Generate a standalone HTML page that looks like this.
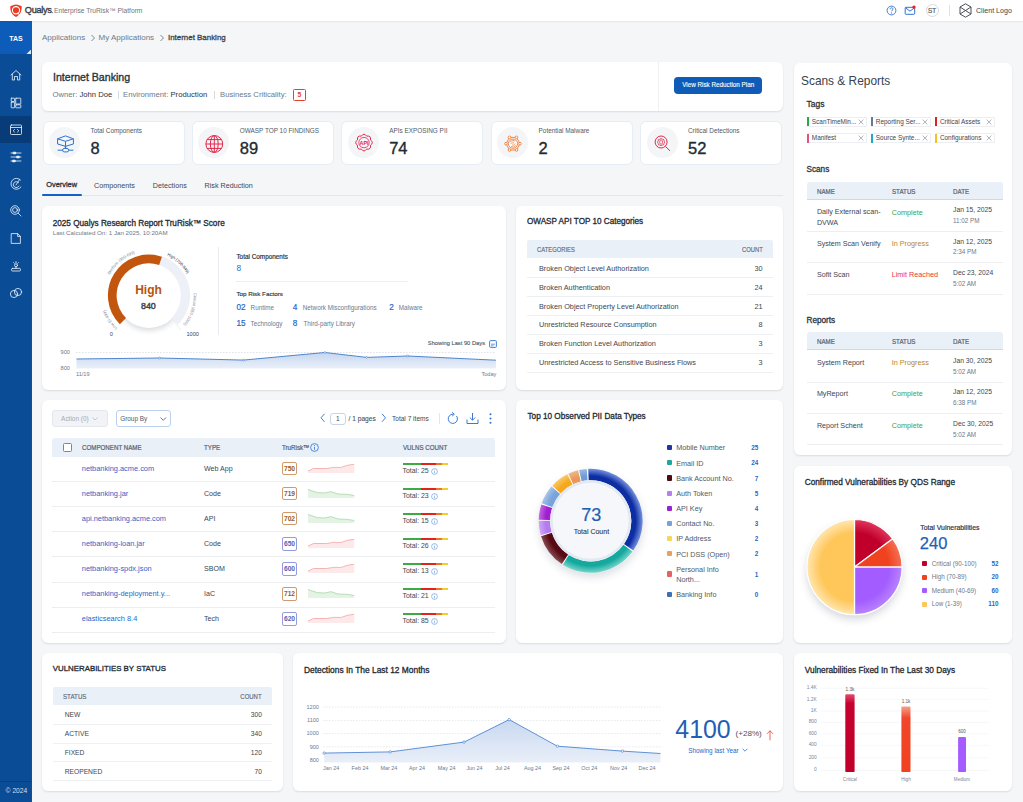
<!DOCTYPE html>
<html><head><meta charset="utf-8">
<style>
*{box-sizing:border-box;margin:0;padding:0}
html,body{width:1023px;height:802px;overflow:hidden}
body{font-family:"Liberation Sans",sans-serif;background:#f5f6f8;color:#2c3440;position:relative}
.abs{position:absolute}
#top{position:absolute;left:0;top:0;width:1023px;height:21px;background:#fff;box-shadow:0 1px 1.5px rgba(0,0,0,.07);z-index:5}
#side{position:absolute;left:0;top:21px;width:32px;height:781px;background:#0a4d96}
.card{position:absolute;background:#fff;border-radius:6px;box-shadow:0 1px 2px rgba(30,45,70,.13)}
.t{position:absolute;white-space:nowrap;line-height:1}
.sc{width:142px;height:44.3px;border:1px solid #e6edf6;box-shadow:none}
.sc .ic{position:absolute;left:5.5px;top:5.5px;width:31px;height:31px;border-radius:50%;background:#f4f5f7}
.sc .lb{position:absolute;left:47px;top:6.5px;font-size:6.4px;color:#4f5a66;white-space:nowrap;line-height:1}
.sc .nm{position:absolute;left:47px;top:18px;font-size:16.5px;color:#222a33;white-space:nowrap;line-height:1;-webkit-text-stroke:0.35px #222a33}
.hd{font-size:7.2px;color:#56636f;transform:scaleX(.86);transform-origin:0 0;-webkit-text-stroke:0.22px #56636f}
.md{-webkit-text-stroke:0.3px currentColor}
</style></head><body>
<!-- TOP BAR -->
<div id="top">
  <svg class="abs" style="left:10px;top:4px" width="12" height="13.5" viewBox="0 0 12 13">
    <path d="M6 0.3 C8 0.6 10.3 1.3 11.7 2 C11.9 6.5 10.5 10.5 6 12.8 C1.5 10.5 0.1 6.5 0.3 2 C1.7 1.3 4 0.6 6 0.3Z" fill="#ec3b23"/>
    <circle cx="6" cy="6" r="3.6" fill="none" stroke="#fff" stroke-width="1.1"/>
    <circle cx="6" cy="6" r="2.2" fill="#ec3b23"/>
    <path d="M7.5 8.5 L9 10.5" stroke="#fff" stroke-width="1"/>
  </svg>
  <div class="t" style="left:24.8px;top:5.6px;font-size:9.2px;color:#363a40;letter-spacing:-0.3px;-webkit-text-stroke:0.35px #363a40">Qualys<span style="font-size:5px">.</span></div>
  <div class="t" style="left:54px;top:7.9px;font-size:6.7px;color:#6f747c">Enterprise TruRisk™ Platform</div>
  <!-- help -->
  <svg class="abs" style="left:886px;top:5px" width="11" height="11" viewBox="0 0 11 11">
    <circle cx="5.5" cy="5.5" r="4.4" fill="none" stroke="#2f72d0" stroke-width="0.9"/>
    <path d="M4 4.3 C4 3.2 4.8 2.8 5.5 2.8 C6.4 2.8 7 3.4 7 4.1 C7 5 5.6 5.2 5.6 6.3" fill="none" stroke="#2f72d0" stroke-width="0.9"/>
    <circle cx="5.6" cy="7.9" r="0.55" fill="#2f72d0"/>
  </svg>
  <!-- mail -->
  <svg class="abs" style="left:904px;top:4px" width="13" height="12" viewBox="0 0 13 12">
    <rect x="1.2" y="3.3" width="9.5" height="7" rx="0.8" fill="none" stroke="#2f72d0" stroke-width="1"/>
    <path d="M1.5 3.8 L6 7.2 L10.5 3.8" fill="none" stroke="#2f72d0" stroke-width="1"/>
    <circle cx="10" cy="3.1" r="1.7" fill="#e8231f"/>
  </svg>
  <!-- ST -->
  <div class="abs" style="left:925.5px;top:4.3px;width:13px;height:13px;border-radius:50%;border:1px solid #d5d9de;font-size:6.3px;color:#555c66;text-align:center;line-height:11.3px;-webkit-text-stroke:0.2px #555c66">ST</div>
  <div class="abs" style="left:949px;top:5px;width:1px;height:11px;background:#dfe2e6"></div>
  <svg class="abs" style="left:959px;top:3px" width="13" height="15" viewBox="0 0 13 15">
    <path d="M6.5 0.8 L12 4 L12 11 L6.5 14.2 L1 11 L1 4 Z" fill="none" stroke="#4a4f57" stroke-width="1"/>
    <path d="M1 4 L12 11 M12 4 L1 11" fill="none" stroke="#4a4f57" stroke-width="1"/>
  </svg>
  <div class="t" style="left:976px;top:8px;font-size:7.1px;color:#3d434b">Client Logo</div>
</div>

<!-- SIDEBAR -->
<div id="side">
  <div class="abs" style="left:0;top:0;width:32px;height:33px;background:#0e5cb9"></div>
  <div class="t" style="left:9.2px;top:13.6px;font-size:7px;font-weight:700;color:#fff">TAS</div>
  <svg class="abs" style="left:25.5px;top:27.5px" width="5.5" height="5.5"><path d="M5.5 0 L5.5 5.5 L0 5.5Z" fill="#dbe7f7"/></svg>
  <div class="abs" style="left:0;top:95px;width:32px;height:27px;background:#083c78"></div>
  <div class="abs" style="left:30.5px;top:33px;width:1.5px;height:748px;background:#0b50a2"></div>
  <svg class="abs" style="left:0;top:0" width="32" height="300" fill="none" stroke="#f2f6fc" stroke-width="0.8" stroke-linejoin="round" stroke-linecap="round">
    <!-- home y=54 -->
    <path d="M11 54 L16 49.5 L21 54 M12.3 53 L12.3 59 L14.5 59 L14.5 55.5 L17.5 55.5 L17.5 59 L19.7 59 L19.7 53"/>
    <!-- dashboard y=81 -->
    <rect x="11.2" y="77.2" width="3.4" height="3.3" rx="0.4"/><rect x="11.2" y="81.2" width="3.4" height="5.6" rx="0.4"/><rect x="15.7" y="77.2" width="5.1" height="5.8" rx="0.4"/><rect x="15.7" y="83.8" width="5.1" height="3" rx="0.4"/>
    <!-- code window y=109 -->
    <rect x="10.5" y="104" width="11" height="9.5" rx="1"/><path d="M10.5 106.5 L21.5 106.5 M14.5 108.5 L13.2 109.8 L14.5 111 M17.5 108.5 L18.8 109.8 L17.5 111"/>
    <!-- sliders y=136 -->
    <path d="M11 132 L21 132 M11 136 L21 136 M11 140 L21 140" stroke-width="0.8"/>
    <rect x="13.5" y="131.2" width="2.2" height="1.6" fill="#fff"/><rect x="17" y="135.2" width="2.2" height="1.6" fill="#fff"/><rect x="13" y="139.2" width="2.2" height="1.6" fill="#fff"/>
    <!-- gauge y=163 -->
    <path d="M20.5 159 A5.5 5.5 0 1 0 21 166"/><path d="M16 164 L19.5 158.5"/><path d="M18.5 161.5 A3 3 0 1 0 19 165"/>
    <!-- search bug y=190 -->
    <circle cx="15" cy="189" r="4.3"/><circle cx="15" cy="189" r="2.4"/><path d="M18.2 192.2 L21 195"/>
    <!-- doc y=217 -->
    <path d="M11.6 212.6 L17.6 212.6 L20.4 215.4 L20.4 222.4 L11.6 222.4 Z M17.6 212.6 L17.6 215.4 L20.4 215.4"/>
    <!-- stamp y=245 -->
    <path d="M16 240.6 L16 241.8 M13.6 241.6 L14.3 242.3 M18.4 241.6 L17.7 242.3"/><circle cx="16" cy="244.3" r="1.5"/><path d="M16 245.8 L16 247.4"/><rect x="11.6" y="247.4" width="8.8" height="2.6" rx="0.8"/>
    <!-- links y=272 -->
    <circle cx="14" cy="273" r="3.6"/><circle cx="18" cy="271" r="3.6"/>
  </svg>
  <div class="abs" style="left:0;top:759.5px;width:31px;height:1px;background:#083f7c"></div>
  <div class="t" style="left:5.6px;top:766.6px;font-size:6.7px;color:#d3dff0">© 2024</div>
</div>

<!-- breadcrumb -->
<div class="t" style="left:42px;top:34px;font-size:8px;color:#6b7a8c">Applications</div>
<svg class="abs" style="left:90px;top:34px" width="6" height="8"><path d="M1.5 1 L4.5 4 L1.5 7" fill="none" stroke="#6b7a8c" stroke-width="0.9"/></svg>
<div class="t" style="left:98.5px;top:34px;font-size:8px;color:#6b7a8c">My Applications</div>
<svg class="abs" style="left:159px;top:34px" width="6" height="8"><path d="M1.5 1 L4.5 4 L1.5 7" fill="none" stroke="#6b7a8c" stroke-width="0.9"/></svg>
<div class="t md" style="left:168px;top:33.75px;font-size:7.93px;color:#3a4350">Internet Banking</div>

<!-- HEADER CARD -->
<div class="card" style="left:42px;top:62px;width:741px;height:49px">
  <div class="t md" style="left:11px;top:10.11px;font-size:10.58px;-webkit-text-stroke:0.35px currentColor;color:#2c333d">Internet Banking</div>
  <div class="t" style="left:10.5px;top:28.8px;font-size:7.7px;color:#6b7a8c">Owner: <span style="color:#2c333d">John Doe</span></div>
  <div class="abs" style="left:76px;top:29px;width:1px;height:8px;background:#d5dae0"></div>
  <div class="t" style="left:81px;top:28.8px;font-size:7.7px;color:#6b7a8c">Environment: <span style="color:#2c333d">Production</span></div>
  <div class="abs" style="left:172px;top:29px;width:1px;height:8px;background:#d5dae0"></div>
  <div class="t" style="left:178px;top:28.8px;font-size:7.7px;color:#6b7a8c">Business Criticality:</div>
  <div class="abs" style="left:251px;top:27px;width:13px;height:12px;border:1px solid #e2412c;border-radius:1.5px;color:#e2412c;font-size:6.8px;font-weight:700;text-align:center;line-height:10.3px">5</div>
  <div class="abs" style="left:616px;top:0;width:1px;height:49px;background:#eef0f3"></div>
  <div class="abs" style="left:632px;top:15.4px;width:88.3px;height:16.9px;background:#0f5cb8;border-radius:4px;color:#fff;font-size:6.3px;text-align:center;line-height:16.9px;-webkit-text-stroke:0.1px #fff">View Risk Reduction Plan</div>
</div>
<!-- STAT CARDS -->
<div class="card sc" style="left:42.5px;top:120.5px">
  <div class="ic"></div>
  <svg class="abs" style="left:12px;top:13px" width="20" height="19" viewBox="0 0 20 19" fill="none" stroke="#2f6fd0" stroke-width="1" stroke-linejoin="round">
    <path d="M9.5 0.9 L17.4 3.8 L17.4 9 L9.5 11.3 L1.6 9 L1.6 3.8 Z M1.6 3.8 L9.5 6.3 L17.4 3.8 M9.5 6.3 L9.5 11.3"/>
    <path d="M9.5 11.3 L9.5 13.5" stroke-width="1.4"/><rect x="6.7" y="13.5" width="5.9" height="3.4" rx="1.5"/><path d="M1.6 15.2 L6.7 15.2 M12.6 15.2 L17.4 15.2"/>
  </svg>
  <div class="lb">Total Components</div><div class="nm">8</div>
</div>
<div class="card sc" style="left:191.8px;top:120.5px">
  <div class="ic"></div>
  <svg class="abs" style="left:12px;top:12px" width="20" height="20" viewBox="0 0 20 20" fill="none" stroke="#e0284a" stroke-width="1">
    <circle cx="9.3" cy="10" r="8.4"/><ellipse cx="9.3" cy="10" rx="3.9" ry="8.4"/><path d="M9.3 1.6 L9.3 18.4 M0.9 10 L17.7 10 M1.9 5.6 L16.7 5.6 M1.9 14.4 L16.7 14.4"/>
  </svg>
  <div class="lb">OWASP TOP 10 FINDINGS</div><div class="nm">89</div>
</div>
<div class="card sc" style="left:341.2px;top:120.5px">
  <div class="ic"></div>
  <svg class="abs" style="left:11.5px;top:11px" width="20" height="20" viewBox="0 0 20 20" fill="none" stroke="#e0284a" stroke-width="1">
    <path d="M7.32 3.13 Q10.00 -0.60 12.68 3.13 Q17.21 2.39 16.47 6.92 Q20.20 9.60 16.47 12.28 Q17.21 16.81 12.68 16.07 Q10.00 19.80 7.32 16.07 Q2.79 16.81 3.53 12.28 Q-0.20 9.60 3.53 6.92 Q2.79 2.39 7.32 3.13 Z"/>
    <circle cx="10" cy="9.6" r="5.2" stroke-width="0.8"/>
    <text x="10" y="11.5" font-size="5.4" font-weight="700" font-family="Liberation Sans" fill="#e0284a" stroke="none" text-anchor="middle">API</text>
  </svg>
  <div class="lb">APIs EXPOSING PII</div><div class="nm">74</div>
</div>
<div class="card sc" style="left:490.6px;top:120.5px">
  <div class="ic"></div>
  <svg class="abs" style="left:12px;top:12px" width="20" height="20" viewBox="0 0 20 20" fill="none" stroke="#ee7d3b" stroke-width="0.9">
    <path d="M5.50 3.40 L12.50 3.40 L16.00 9.70 L12.50 16.00 L5.50 16.00 L2.00 9.70Z"/>
    <circle cx="9" cy="9.7" r="4.6" fill="#fff"/>
    <circle cx="5.50" cy="3.40" r="1.35" fill="#fff"/><circle cx="12.50" cy="3.40" r="1.35" fill="#fff"/><circle cx="16.00" cy="9.70" r="1.35" fill="#fff"/><circle cx="12.50" cy="16.00" r="1.35" fill="#fff"/><circle cx="5.50" cy="16.00" r="1.35" fill="#fff"/><circle cx="2.00" cy="9.70" r="1.35" fill="#fff"/>
    <path d="M6 8.2 C7 6.199999999999999 10 5.8999999999999995 11 7.199999999999999 M6.8 9.899999999999999 C7.5 7.8999999999999995 9.5 7.699999999999999 10 8.7 M12 11.2 C11 13.2 8 13.5 7 12.2 M11.2 9.5 C10.5 11.5 8.5 11.7 8 10.7" stroke-width="0.75"/>
    <circle cx="9" cy="9.7" r="0.5" fill="#ee7d3b" stroke="none"/>
  </svg>
  <div class="lb">Potential Malware</div><div class="nm">2</div>
</div>
<div class="card sc" style="left:640px;top:120.5px">
  <div class="ic"></div>
  <svg class="abs" style="left:12px;top:12px" width="20" height="20" viewBox="0 0 20 20" fill="none" stroke="#e0284a" stroke-width="1">
    <circle cx="8.1" cy="8" r="6"/><path d="M12.4 12.3 L17 16.9"/>
    <path d="M8.1 4.6 L9.4 5.2 L10.8 5.6 L11.1 7 L11.6 8.2 L11 9.5 L10.7 10.8 L9.3 11.1 L8.1 11.6 L6.9 11.1 L5.5 10.8 L5.2 9.5 L4.6 8.2 L5.1 7 L5.4 5.6 L6.8 5.2 Z" stroke-width="0.8"/>
    <ellipse cx="8.1" cy="8.1" rx="1.5" ry="2.1" stroke-width="0.7"/>
  </svg>
  <div class="lb">Critical Detections</div><div class="nm">52</div>
</div>

<!-- TABS -->
<div class="t md" style="left:46.3px;top:181.37px;font-size:7.39px;color:#2c333d">Overview</div>
<div class="t" style="left:94px;top:181.7px;font-size:7.2px;color:#3f4853">Components</div>
<div class="t" style="left:152.8px;top:181.7px;font-size:7.2px;color:#3f4853">Detections</div>
<div class="t" style="left:204.5px;top:181.7px;font-size:7.2px;color:#3f4853">Risk Reduction</div>
<div class="abs" style="left:42px;top:195px;width:741px;height:1px;background:#e3e6ea"></div>
<div class="abs" style="left:42px;top:193.8px;width:39.5px;height:2px;background:#1662c4;border-radius:1px"></div>
<!-- TRURISK CARD -->
<div class="card" style="left:42px;top:206px;width:464px;height:184px"></div>
<div class="t md" style="left:52.7px;top:220px;font-size:8.2px;color:#232a33">2025 Qualys Research Report TruRisk™ Score</div>
<div class="t" style="left:52.7px;top:230.2px;font-size:6.2px;color:#6b7a8c">Last Calculated On: 1 Jan 2025, 10:20AM</div>
<div class="abs" style="left:116.5px;top:263.2px;width:64.4px;height:64.4px;border-radius:50%;background:#fff;box-shadow:0 3px 5px rgba(40,50,70,.16)"></div>
<svg class="abs" style="left:90px;top:240px;overflow:visible" width="120" height="105" viewBox="90 240 120 105"><defs><path id="lm" d="M106.20 284.01 A44 44 0 0 1 144.87 251.57"/><path id="lh" d="M156.34 252.07 A44 44 0 0 1 191.20 284.01"/><path id="lc" d="M192.17 283.75 A45 45 0 0 1 176.40 330.86"/><path id="ll" d="M125.95 334.80 A45.5 45.5 0 0 1 103.37 299.37"/></defs><path d="M161.98 256.82 A40.8 40.8 0 0 1 177.55 324.25" fill="none" stroke="#e3e8ef" stroke-width="0.8"/><path d="M160.57 260.94 A36.45 36.45 0 0 1 174.47 321.17" fill="none" stroke="#edf1f7" stroke-width="8.7"/><path d="M122.93 321.17 A36.45 36.45 0 0 1 160.57 260.94" fill="none" stroke="#c2560e" stroke-width="8.7"/><text font-size="4.1" fill="#7b8794" font-family="Liberation Sans"><textPath href="#lm" startOffset="50%" text-anchor="middle">Medium (300-699)</textPath></text><text font-size="4.1" fill="#2c333d" font-family="Liberation Sans"><textPath href="#lh" startOffset="50%" text-anchor="middle">High (700-849)</textPath></text><text font-size="4.1" fill="#7b8794" font-family="Liberation Sans"><textPath href="#lc" startOffset="50%" text-anchor="middle">Critical (850-1000)</textPath></text><text font-size="4.1" fill="#7b8794" font-family="Liberation Sans"><textPath href="#ll" startOffset="50%" text-anchor="middle">Low (0-499)</textPath></text><path d="M172.0 318.7 L180.8 329.8" stroke="#e6e9ee" stroke-width="0.8"/></svg>
<div class="t" style="left:135.2px;top:283.8px;font-size:12px;font-weight:700;color:#b8530c">High</div>
<div class="t md" style="left:141px;top:302.21px;font-size:8.9px;-webkit-text-stroke:0.45px currentColor;color:#3d4650">840</div>
<div class="t" style="left:109.8px;top:331.5px;font-size:5.6px;color:#3d4650">0</div>
<div class="t" style="left:186.5px;top:331.5px;font-size:5.6px;color:#3d4650">1000</div>
<div class="abs" style="left:218px;top:247px;width:1px;height:88px;background:#e8ebef"></div>
<div class="t md" style="left:236.4px;top:253.82px;font-size:6.4px;-webkit-text-stroke:0.18px currentColor;color:#2c333d">Total Components</div>
<div class="t" style="left:236.4px;top:263.5px;font-size:8.3px;color:#1f68c9">8</div>
<div class="abs" style="left:236px;top:280.8px;width:172px;height:1px;background:#eceef1"></div>
<div class="t md" style="left:236.4px;top:291.02px;font-size:6.25px;-webkit-text-stroke:0.15px currentColor;color:#2c333d">Top Risk Factors</div>
<div class="t" style="left:236.4px;top:303.5px;font-size:8.2px;color:#1f68c9;-webkit-text-stroke:0.2px #1f68c9">02</div>
<div class="t" style="left:250.6px;top:304.6px;font-size:6.3px;color:#6b7a8c">Runtime</div>
<div class="t" style="left:292.8px;top:303.5px;font-size:8.2px;color:#1f68c9;-webkit-text-stroke:0.2px #1f68c9">4</div>
<div class="t" style="left:302.8px;top:304.6px;font-size:6.3px;color:#6b7a8c">Network Misconfigurations</div>
<div class="t" style="left:389.3px;top:303.5px;font-size:8.2px;color:#1f68c9;-webkit-text-stroke:0.2px #1f68c9">2</div>
<div class="t" style="left:398.8px;top:304.6px;font-size:6.3px;color:#6b7a8c">Malware</div>
<div class="t" style="left:236.4px;top:320.2px;font-size:8.2px;color:#1f68c9;-webkit-text-stroke:0.2px #1f68c9">15</div>
<div class="t" style="left:250.6px;top:321.3px;font-size:6.3px;color:#6b7a8c">Technology</div>
<div class="t" style="left:292.8px;top:320.2px;font-size:8.2px;color:#1f68c9;-webkit-text-stroke:0.2px #1f68c9">8</div>
<div class="t" style="left:303.5px;top:321.3px;font-size:6.3px;color:#6b7a8c">Third-party Library</div>
<div class="t md" style="left:427.8px;top:340.90px;font-size:5.75px;-webkit-text-stroke:0.12px currentColor;color:#4f5a66;">Showing Last 90 Days</div>
<svg class="abs" style="left:488.5px;top:339.5px" width="8" height="8" viewBox="0 0 8 8"><rect x="0.6" y="0.6" width="6.8" height="6.8" rx="1" fill="none" stroke="#2f72d0" stroke-width="0.9"/><path d="M2 4.2 L6 4.2 M2 5.8 L4.5 5.8" stroke="#2f72d0" stroke-width="0.7"/></svg>
<svg class="abs" style="left:0;top:0" width="1023" height="802" viewBox="0 0 1023 802" pointer-events="none"><defs><linearGradient id="ga" x1="0" y1="0" x2="0" y2="1"><stop offset="0" stop-color="#c5d6f0"/><stop offset="1" stop-color="#eaf0f9"/></linearGradient></defs><path d="M76 352.5 L496 352.5" stroke="#c9ced6" stroke-width="0.6" stroke-dasharray="1.5 1.5"/><polygon points="76.5,368.5 76.5,359 159.6,358 243.5,360.1 324.9,352.5 366.6,357.4 407.7,356 495.9,360.2 495.9,368.5" fill="url(#ga)"/><polyline points="76.5,359 159.6,358 243.5,360.1 324.9,352.5 366.6,357.4 407.7,356 495.9,360.2" fill="none" stroke="#4f86cf" stroke-width="1"/><circle cx="159.6" cy="358" r="0.9" fill="#fff" stroke="#4f86cf" stroke-width="0.6"/><circle cx="243.5" cy="360.1" r="0.9" fill="#fff" stroke="#4f86cf" stroke-width="0.6"/><circle cx="324.9" cy="352.5" r="0.9" fill="#fff" stroke="#4f86cf" stroke-width="0.6"/><circle cx="366.6" cy="357.4" r="0.9" fill="#fff" stroke="#4f86cf" stroke-width="0.6"/><circle cx="407.7" cy="356" r="0.9" fill="#fff" stroke="#4f86cf" stroke-width="0.6"/></svg>
<div class="t" style="left:60.6px;top:350.4px;font-size:5.6px;color:#6b7a8c">900</div>
<div class="t" style="left:60.6px;top:366.2px;font-size:5.6px;color:#6b7a8c">800</div>
<div class="t" style="left:76px;top:371.5px;font-size:5.6px;color:#6b7a8c">11/19</div>
<div class="t" style="left:481.4px;top:372.2px;font-size:5.6px;color:#6b7a8c">Today</div>
<!-- OWASP -->
<div class="card" style="left:516px;top:206px;width:267px;height:184px"></div>
<div class="t md" style="left:527px;top:218.21px;font-size:8.13px;color:#232a33">OWASP API TOP 10 Categories</div>
<div class="abs" style="left:527px;top:240px;width:246px;height:18.3px;background:#eaf0f8;border-radius:2px 2px 0 0"></div>
<div class="t" style="left:537.4px;top:246.2px;font-size:7.3px;color:#5d6b7a;transform:scaleX(.8);transform-origin:0 0;-webkit-text-stroke:0.15px #5d6b7a">CATEGORIES</div>
<div class="t" style="left:741.5px;top:246.2px;font-size:7.3px;color:#5d6b7a;transform:scaleX(.8);transform-origin:0 0;-webkit-text-stroke:0.15px #5d6b7a">COUNT</div>
<div class="t" style="left:539px;top:264.8px;font-size:7.3px;color:#3e4650">Broken Object Level Authorization</div>
<div class="t" style="right:260.5px;top:264.8px;font-size:7.3px;color:#3e4650">30</div>
<div class="abs" style="left:527px;top:277.2px;width:246px;height:0.8px;background:#edf0f3"></div>
<div class="t" style="left:539px;top:283.7px;font-size:7.3px;color:#3e4650">Broken Authentication</div>
<div class="t" style="right:260.5px;top:283.7px;font-size:7.3px;color:#3e4650">24</div>
<div class="abs" style="left:527px;top:296.1px;width:246px;height:0.8px;background:#edf0f3"></div>
<div class="t" style="left:539px;top:302.5px;font-size:7.3px;color:#3e4650">Broken Object Property Level Authorization</div>
<div class="t" style="right:260.5px;top:302.5px;font-size:7.3px;color:#3e4650">21</div>
<div class="abs" style="left:527px;top:314.9px;width:246px;height:0.8px;background:#edf0f3"></div>
<div class="t" style="left:539px;top:321.4px;font-size:7.3px;color:#3e4650">Unrestricted Resource Consumption</div>
<div class="t" style="right:260.5px;top:321.4px;font-size:7.3px;color:#3e4650">8</div>
<div class="abs" style="left:527px;top:333.8px;width:246px;height:0.8px;background:#edf0f3"></div>
<div class="t" style="left:539px;top:340.2px;font-size:7.3px;color:#3e4650">Broken Function Level Authorization</div>
<div class="t" style="right:260.5px;top:340.2px;font-size:7.3px;color:#3e4650">3</div>
<div class="abs" style="left:527px;top:352.6px;width:246px;height:0.8px;background:#edf0f3"></div>
<div class="t" style="left:539px;top:359.1px;font-size:7.3px;color:#3e4650">Unrestricted Access to Sensitive Business Flows</div>
<div class="t" style="right:260.5px;top:359.1px;font-size:7.3px;color:#3e4650">3</div>
<div class="abs" style="left:527px;top:371.5px;width:246px;height:0.8px;background:#edf0f3"></div>
<!-- SCANS & REPORTS -->
<div class="card" style="left:794px;top:62.5px;width:218.3px;height:392px"></div>
<div class="t" style="left:801px;top:75.5px;font-size:11.9px;color:#3a424c">Scans &amp; Reports</div>
<div class="t md" style="left:806.5px;top:100.49px;font-size:8.5px;color:#2c333d">Tags</div>
<div class="abs" style="left:806.8px;top:116.8px;width:60.2px;height:9.8px;border:0.8px solid #eceef1;border-left:none;border-radius:1px;background:#fff"></div>
<div class="abs" style="left:806.8px;top:117.1px;width:1.8px;height:9.2px;background:#2aa84a"></div>
<div class="t" style="left:811.8px;top:118.5px;font-size:6.45px;color:#3e4650">ScanTimeMin...</div>
<svg class="abs" style="left:858.3px;top:118.8px" width="6" height="6"><path d="M0.6 0.6 L5.4 5.4 M5.4 0.6 L0.6 5.4" stroke="#7b838d" stroke-width="0.6"/></svg>
<div class="abs" style="left:870.8px;top:116.8px;width:60.2px;height:9.8px;border:0.8px solid #eceef1;border-left:none;border-radius:1px;background:#fff"></div>
<div class="abs" style="left:870.8px;top:117.1px;width:1.8px;height:9.2px;background:#5f7c95"></div>
<div class="t" style="left:875.8px;top:118.5px;font-size:6.45px;color:#3e4650">Reporting Ser...</div>
<svg class="abs" style="left:922.3px;top:118.8px" width="6" height="6"><path d="M0.6 0.6 L5.4 5.4 M5.4 0.6 L0.6 5.4" stroke="#7b838d" stroke-width="0.6"/></svg>
<div class="abs" style="left:934.9px;top:116.8px;width:60.2px;height:9.8px;border:0.8px solid #eceef1;border-left:none;border-radius:1px;background:#fff"></div>
<div class="abs" style="left:934.9px;top:117.1px;width:1.8px;height:9.2px;background:#d9261c"></div>
<div class="t" style="left:939.9px;top:118.5px;font-size:6.45px;color:#3e4650">Critical Assets</div>
<svg class="abs" style="left:986.4px;top:118.8px" width="6" height="6"><path d="M0.6 0.6 L5.4 5.4 M5.4 0.6 L0.6 5.4" stroke="#7b838d" stroke-width="0.6"/></svg>
<div class="abs" style="left:806.8px;top:133.4px;width:60.2px;height:9.8px;border:0.8px solid #eceef1;border-left:none;border-radius:1px;background:#fff"></div>
<div class="abs" style="left:806.8px;top:133.7px;width:1.8px;height:9.2px;background:#e2537c"></div>
<div class="t" style="left:811.8px;top:135.1px;font-size:6.45px;color:#3e4650">Manifest</div>
<svg class="abs" style="left:858.3px;top:135.4px" width="6" height="6"><path d="M0.6 0.6 L5.4 5.4 M5.4 0.6 L0.6 5.4" stroke="#7b838d" stroke-width="0.6"/></svg>
<div class="abs" style="left:870.8px;top:133.4px;width:60.2px;height:9.8px;border:0.8px solid #eceef1;border-left:none;border-radius:1px;background:#fff"></div>
<div class="abs" style="left:870.8px;top:133.7px;width:1.8px;height:9.2px;background:#22a8c2"></div>
<div class="t" style="left:875.8px;top:135.1px;font-size:6.45px;color:#3e4650">Source Synte...</div>
<svg class="abs" style="left:922.3px;top:135.4px" width="6" height="6"><path d="M0.6 0.6 L5.4 5.4 M5.4 0.6 L0.6 5.4" stroke="#7b838d" stroke-width="0.6"/></svg>
<div class="abs" style="left:934.9px;top:133.4px;width:60.2px;height:9.8px;border:0.8px solid #eceef1;border-left:none;border-radius:1px;background:#fff"></div>
<div class="abs" style="left:934.9px;top:133.7px;width:1.8px;height:9.2px;background:#ecc32c"></div>
<div class="t" style="left:939.9px;top:135.1px;font-size:6.45px;color:#3e4650">Configurations</div>
<svg class="abs" style="left:986.4px;top:135.4px" width="6" height="6"><path d="M0.6 0.6 L5.4 5.4 M5.4 0.6 L0.6 5.4" stroke="#7b838d" stroke-width="0.6"/></svg>
<div class="t md" style="left:806.5px;top:166.1px;font-size:8.2px;color:#2c333d">Scans</div>
<div class="abs" style="left:806.6px;top:181.7px;width:196.5px;height:18.3px;background:#eaf0f8;border-radius:3px 3px 0 0;border-bottom:0.8px solid #c9d9ee"></div>
<div class="t hd" style="left:816.9px;top:187.7px">NAME</div>
<div class="t hd" style="left:891.7px;top:187.7px">STATUS</div>
<div class="t hd" style="left:953px;top:187.7px">DATE</div>
<div class="t" style="left:816.9px;top:209.3px;font-size:7.17px;color:#3e4650">Daily External scan-</div>
<div class="t" style="left:816.9px;top:219.7px;font-size:7.17px;color:#3e4650">DVWA</div>
<div class="t" style="left:891.7px;top:208.5px;font-size:7.25px;color:#3aa33f">Complete</div>
<div class="t" style="left:953px;top:207.2px;font-size:6.78px;color:#3e4650">Jan 15, 2025</div>
<div class="t" style="left:953px;top:218.2px;font-size:6.3px;color:#6b7a8c">11:02 PM</div>
<div class="abs" style="left:806.6px;top:231.2px;width:196.5px;height:0.8px;background:#eceef1"></div>
<div class="t" style="left:816.9px;top:240.6px;font-size:7.17px;color:#3e4650">System Scan Venify</div>
<div class="t" style="left:891.7px;top:239.8px;font-size:7.25px;color:#b7862c">In Progress</div>
<div class="t" style="left:953px;top:238.6px;font-size:6.78px;color:#3e4650">Jan 12, 2025</div>
<div class="t" style="left:953px;top:249.3px;font-size:6.3px;color:#6b7a8c">2:34 PM</div>
<div class="abs" style="left:806.6px;top:262.3px;width:196.5px;height:0.8px;background:#eceef1"></div>
<div class="t" style="left:816.9px;top:272.1px;font-size:7.17px;color:#3e4650">Sofit Scan</div>
<div class="t" style="left:891.7px;top:271.3px;font-size:7.25px;color:#e53a2f">Limit Reached</div>
<div class="t" style="left:953px;top:270.0px;font-size:6.78px;color:#3e4650">Dec 23, 2024</div>
<div class="t" style="left:953px;top:280.7px;font-size:6.3px;color:#6b7a8c">5:02 AM</div>
<div class="abs" style="left:806.6px;top:293.8px;width:196.5px;height:0.8px;background:#eceef1"></div>
<div class="t md" style="left:806.5px;top:317.3px;font-size:8.2px;color:#2c333d">Reports</div>
<div class="abs" style="left:806.6px;top:332.1px;width:196.5px;height:18.3px;background:#eaf0f8;border-radius:3px 3px 0 0;border-bottom:0.8px solid #c9d9ee"></div>
<div class="t hd" style="left:816.9px;top:338.1px">NAME</div>
<div class="t hd" style="left:891.7px;top:338.1px">STATUS</div>
<div class="t hd" style="left:953px;top:338.1px">DATE</div>
<div class="t" style="left:816.9px;top:360.0px;font-size:7.17px;color:#3e4650">System Report</div>
<div class="t" style="left:891.7px;top:359.2px;font-size:7.25px;color:#b7862c">In Progress</div>
<div class="t" style="left:953px;top:358.1px;font-size:6.78px;color:#3e4650">Jan 30, 2025</div>
<div class="t" style="left:953px;top:368.6px;font-size:6.3px;color:#6b7a8c">5:02 AM</div>
<div class="abs" style="left:806.6px;top:381.6px;width:196.5px;height:0.8px;background:#eceef1"></div>
<div class="t" style="left:816.9px;top:391.2px;font-size:7.17px;color:#3e4650">MyReport</div>
<div class="t" style="left:891.7px;top:390.4px;font-size:7.25px;color:#3aa33f">Complete</div>
<div class="t" style="left:953px;top:389.4px;font-size:6.78px;color:#3e4650">Jan 12, 2025</div>
<div class="t" style="left:953px;top:400.1px;font-size:6.3px;color:#6b7a8c">6:38 PM</div>
<div class="abs" style="left:806.6px;top:413.0px;width:196.5px;height:0.8px;background:#eceef1"></div>
<div class="t" style="left:816.9px;top:422.7px;font-size:7.17px;color:#3e4650">Report Schent</div>
<div class="t" style="left:891.7px;top:421.9px;font-size:7.25px;color:#3aa33f">Complete</div>
<div class="t" style="left:953px;top:420.7px;font-size:6.78px;color:#3e4650">Dec 30, 2025</div>
<div class="t" style="left:953px;top:431.5px;font-size:6.3px;color:#6b7a8c">5:02 AM</div>
<div class="abs" style="left:806.6px;top:444.2px;width:196.5px;height:0.8px;background:#eceef1"></div>
<!-- COMPONENTS CARD -->
<div class="card" style="left:42px;top:399.5px;width:464px;height:243px"></div>
<div class="abs" style="left:52.4px;top:410.1px;width:55.2px;height:17px;background:#f1f3f6;border:0.8px solid #e4e7eb;border-radius:3px"></div>
<div class="t" style="left:61.1px;top:415.6px;font-size:6.45px;color:#a3abb5">Action (0)</div>
<svg class="abs" style="left:92px;top:416.5px" width="6" height="4"><path d="M0.5 0.5 L3 3 L5.5 0.5" fill="none" stroke="#b5bcc5" stroke-width="0.8"/></svg>
<div class="abs" style="left:116.2px;top:410.1px;width:55.2px;height:17px;background:#fff;border:0.8px solid #bcd1ee;border-radius:3px"></div>
<div class="t" style="left:120.2px;top:416.2px;font-size:6.4px;color:#4f5a66">Group By</div>
<svg class="abs" style="left:160px;top:416.5px" width="7" height="4"><path d="M0.5 0.5 L3.3 3.3 L6.1 0.5" fill="none" stroke="#2f72d0" stroke-width="0.9"/></svg>
<svg class="abs" style="left:319.5px;top:413px" width="6" height="10"><path d="M4.5 0.8 L1 4.8 L4.5 8.8" fill="none" stroke="#2f72d0" stroke-width="0.9"/></svg>
<div class="abs" style="left:329.8px;top:412.9px;width:16px;height:11.7px;border:0.8px solid #c9d5e6;border-radius:3px;font-size:6.6px;color:#3e4650;text-align:center;line-height:10.2px">1</div>
<div class="t" style="left:348.6px;top:416px;font-size:6.6px;color:#4a5360;-webkit-text-stroke:0.1px #4a5360">/ 1 pages</div>
<svg class="abs" style="left:380.5px;top:413px" width="6" height="10"><path d="M1 0.8 L4.5 4.8 L1 8.8" fill="none" stroke="#2f72d0" stroke-width="0.9"/></svg>
<div class="t" style="left:392px;top:416px;font-size:6.55px;color:#3e4650">Total 7 items</div>
<div class="abs" style="left:439.4px;top:413px;width:0.8px;height:11px;background:#e3e6ea"></div>
<svg class="abs" style="left:446.5px;top:411.5px" width="12" height="13" viewBox="0 0 12 13"><path d="M9.5 4 A4.6 4.6 0 1 1 6 2.2" fill="none" stroke="#2f72d0" stroke-width="0.95"/><path d="M5.2 0.3 L7.3 2.2 L5.2 4.1" fill="none" stroke="#2f72d0" stroke-width="0.95"/></svg>
<svg class="abs" style="left:465.5px;top:411.5px" width="13" height="13" viewBox="0 0 13 13"><path d="M6.5 1 L6.5 8 M3.8 5.5 L6.5 8.2 L9.2 5.5 M1 7.5 L1 11.5 L12 11.5 L12 7.5" fill="none" stroke="#2f72d0" stroke-width="0.95"/></svg>
<svg class="abs" style="left:488.5px;top:412.5px" width="3" height="12"><circle cx="1.5" cy="1.3" r="1" fill="#2f72d0"/><circle cx="1.5" cy="5.5" r="1" fill="#2f72d0"/><circle cx="1.5" cy="9.7" r="1" fill="#2f72d0"/></svg>
<div class="abs" style="left:52.4px;top:437.5px;width:442.8px;height:19.2px;background:#eaf0f8;border-radius:3px 3px 0 0"></div>
<div class="abs" style="left:63px;top:443px;width:8.8px;height:8.5px;border:0.9px solid #7d8691;border-radius:1.5px;background:#fff"></div>
<div class="t hd" style="left:81.8px;top:443.8px">COMPONENT NAME</div>
<div class="t hd" style="left:204px;top:443.8px">TYPE</div>
<div class="t hd" style="left:282.2px;top:443.8px">TruRisk™</div>
<div class="t hd" style="left:402.5px;top:443.8px">VULNS COUNT</div>
<svg class="abs" style="left:309.5px;top:442.8px" width="9" height="9" viewBox="0 0 9 9"><circle cx="4.5" cy="4.5" r="3.9" fill="none" stroke="#2f72d0" stroke-width="0.8"/><path d="M4.5 3.8 L4.5 6.8" stroke="#2f72d0" stroke-width="0.8"/><circle cx="4.5" cy="2.5" r="0.5" fill="#2f72d0"/></svg>
<div class="t" style="left:81.8px;top:465.0px;font-size:7.4px;color:#1f68c9">netbanking.acme.com</div>
<div class="t" style="left:204px;top:465.6px;font-size:7.1px;color:#3e4650">Web App</div>
<div class="abs" style="left:281.6px;top:462.0px;width:15.9px;height:13.4px;border:1px solid #cf9a6c;border-radius:2px;font-size:6.7px;font-weight:700;color:#9b5a22;text-align:center;line-height:11.4px;letter-spacing:-0.1px">750</div>
<svg class="abs" style="left:307.5px;top:463.8px" width="47" height="10"><polygon points="0,9 0.0,7.0 5.6,4.5 18.5,4.5 25.5,3.4 33.3,3.4 39.4,1.3 46.3,0.2 46.3,9" fill="#fde9e9"/><polyline points="0.0,7.0 5.6,4.5 18.5,4.5 25.5,3.4 33.3,3.4 39.4,1.3 46.3,0.2" fill="none" stroke="#f2a3a3" stroke-width="0.8"/></svg>
<div class="abs" style="left:402.5px;top:462.9px;width:18.8px;height:2px;background:#3faa45"></div>
<div class="abs" style="left:421.3px;top:462.9px;width:14.8px;height:2px;background:#e2231a"></div>
<div class="abs" style="left:436.1px;top:462.9px;width:5.6px;height:2px;background:#e8792b"></div>
<div class="abs" style="left:441.7px;top:462.9px;width:5.9px;height:2px;background:#f3cd2e"></div>
<div class="t" style="left:402.5px;top:467.7px;font-size:6.95px;color:#3e4650">Total: 25</div>
<svg class="abs" style="left:431px;top:467.8px" width="7" height="7" viewBox="0 0 7 7"><circle cx="3.5" cy="3.5" r="2.9" fill="none" stroke="#5b8fd6" stroke-width="0.6"/><path d="M3.5 3 L3.5 5.3" stroke="#5b8fd6" stroke-width="0.6"/><circle cx="3.5" cy="1.9" r="0.35" fill="#5b8fd6"/></svg>
<div class="abs" style="left:52.4px;top:481.2px;width:442.8px;height:0.8px;background:#eceef1"></div>
<div class="t" style="left:81.8px;top:490.1px;font-size:7.4px;color:#1f68c9">netbanking.jar</div>
<div class="t" style="left:204px;top:490.7px;font-size:7.1px;color:#3e4650">Code</div>
<div class="abs" style="left:281.6px;top:487.1px;width:15.9px;height:13.4px;border:1px solid #cf9a6c;border-radius:2px;font-size:6.7px;font-weight:700;color:#9b5a22;text-align:center;line-height:11.4px;letter-spacing:-0.1px">719</div>
<svg class="abs" style="left:307.5px;top:488.9px" width="47" height="10"><polygon points="0,9 0.0,0.5 9.3,3.6 16.2,4.0 23.1,2.7 30.1,5.0 39.4,5.4 46.3,6.5 46.3,9" fill="#e4f3e4"/><polyline points="0.0,0.5 9.3,3.6 16.2,4.0 23.1,2.7 30.1,5.0 39.4,5.4 46.3,6.5" fill="none" stroke="#a9d6a9" stroke-width="0.8"/></svg>
<div class="abs" style="left:402.5px;top:488.0px;width:18.8px;height:2px;background:#3faa45"></div>
<div class="abs" style="left:421.3px;top:488.0px;width:14.8px;height:2px;background:#e2231a"></div>
<div class="abs" style="left:436.1px;top:488.0px;width:5.6px;height:2px;background:#e8792b"></div>
<div class="abs" style="left:441.7px;top:488.0px;width:5.9px;height:2px;background:#f3cd2e"></div>
<div class="t" style="left:402.5px;top:492.8px;font-size:6.95px;color:#3e4650">Total: 23</div>
<svg class="abs" style="left:431px;top:492.9px" width="7" height="7" viewBox="0 0 7 7"><circle cx="3.5" cy="3.5" r="2.9" fill="none" stroke="#5b8fd6" stroke-width="0.6"/><path d="M3.5 3 L3.5 5.3" stroke="#5b8fd6" stroke-width="0.6"/><circle cx="3.5" cy="1.9" r="0.35" fill="#5b8fd6"/></svg>
<div class="abs" style="left:52.4px;top:506.3px;width:442.8px;height:0.8px;background:#eceef1"></div>
<div class="t" style="left:81.8px;top:515.1px;font-size:7.4px;color:#1f68c9">api.netbanking.acme.com</div>
<div class="t" style="left:204px;top:515.7px;font-size:7.1px;color:#3e4650">API</div>
<div class="abs" style="left:281.6px;top:512.1px;width:15.9px;height:13.4px;border:1px solid #cf9a6c;border-radius:2px;font-size:6.7px;font-weight:700;color:#9b5a22;text-align:center;line-height:11.4px;letter-spacing:-0.1px">702</div>
<svg class="abs" style="left:307.5px;top:513.9px" width="47" height="10"><polygon points="0,9 0.0,0.5 9.3,3.6 16.2,4.0 23.1,2.7 30.1,5.0 39.4,5.4 46.3,6.5 46.3,9" fill="#e4f3e4"/><polyline points="0.0,0.5 9.3,3.6 16.2,4.0 23.1,2.7 30.1,5.0 39.4,5.4 46.3,6.5" fill="none" stroke="#a9d6a9" stroke-width="0.8"/></svg>
<div class="abs" style="left:402.5px;top:513.0px;width:18.8px;height:2px;background:#3faa45"></div>
<div class="abs" style="left:421.3px;top:513.0px;width:14.8px;height:2px;background:#e2231a"></div>
<div class="abs" style="left:436.1px;top:513.0px;width:5.6px;height:2px;background:#e8792b"></div>
<div class="abs" style="left:441.7px;top:513.0px;width:5.9px;height:2px;background:#f3cd2e"></div>
<div class="t" style="left:402.5px;top:517.8px;font-size:6.95px;color:#3e4650">Total: 15</div>
<svg class="abs" style="left:431px;top:517.9px" width="7" height="7" viewBox="0 0 7 7"><circle cx="3.5" cy="3.5" r="2.9" fill="none" stroke="#5b8fd6" stroke-width="0.6"/><path d="M3.5 3 L3.5 5.3" stroke="#5b8fd6" stroke-width="0.6"/><circle cx="3.5" cy="1.9" r="0.35" fill="#5b8fd6"/></svg>
<div class="abs" style="left:52.4px;top:531.3px;width:442.8px;height:0.8px;background:#eceef1"></div>
<div class="t" style="left:81.8px;top:540.2px;font-size:7.4px;color:#1f68c9">netbanking-loan.jar</div>
<div class="t" style="left:204px;top:540.8px;font-size:7.1px;color:#3e4650">Code</div>
<div class="abs" style="left:281.6px;top:537.2px;width:15.9px;height:13.4px;border:1px solid #959bdc;border-radius:2px;font-size:6.7px;font-weight:700;color:#5960b5;text-align:center;line-height:11.4px;letter-spacing:-0.1px">650</div>
<svg class="abs" style="left:307.5px;top:539.0px" width="47" height="10"><polygon points="0,9 0.0,7.0 5.6,4.5 18.5,4.5 25.5,3.4 33.3,3.4 39.4,1.3 46.3,0.2 46.3,9" fill="#fde9e9"/><polyline points="0.0,7.0 5.6,4.5 18.5,4.5 25.5,3.4 33.3,3.4 39.4,1.3 46.3,0.2" fill="none" stroke="#f2a3a3" stroke-width="0.8"/></svg>
<div class="abs" style="left:402.5px;top:538.1px;width:18.8px;height:2px;background:#3faa45"></div>
<div class="abs" style="left:421.3px;top:538.1px;width:14.8px;height:2px;background:#e2231a"></div>
<div class="abs" style="left:436.1px;top:538.1px;width:5.6px;height:2px;background:#e8792b"></div>
<div class="abs" style="left:441.7px;top:538.1px;width:5.9px;height:2px;background:#f3cd2e"></div>
<div class="t" style="left:402.5px;top:542.9px;font-size:6.95px;color:#3e4650">Total: 26</div>
<svg class="abs" style="left:431px;top:543.0px" width="7" height="7" viewBox="0 0 7 7"><circle cx="3.5" cy="3.5" r="2.9" fill="none" stroke="#5b8fd6" stroke-width="0.6"/><path d="M3.5 3 L3.5 5.3" stroke="#5b8fd6" stroke-width="0.6"/><circle cx="3.5" cy="1.9" r="0.35" fill="#5b8fd6"/></svg>
<div class="abs" style="left:52.4px;top:556.4px;width:442.8px;height:0.8px;background:#eceef1"></div>
<div class="t" style="left:81.8px;top:565.3px;font-size:7.4px;color:#1f68c9">netbanking-spdx.json</div>
<div class="t" style="left:204px;top:565.9px;font-size:7.1px;color:#3e4650">SBOM</div>
<div class="abs" style="left:281.6px;top:562.3px;width:15.9px;height:13.4px;border:1px solid #959bdc;border-radius:2px;font-size:6.7px;font-weight:700;color:#5960b5;text-align:center;line-height:11.4px;letter-spacing:-0.1px">600</div>
<svg class="abs" style="left:307.5px;top:564.1px" width="47" height="10"><polygon points="0,9 0.0,7.0 5.6,4.5 18.5,4.5 25.5,3.4 33.3,3.4 39.4,1.3 46.3,0.2 46.3,9" fill="#fde9e9"/><polyline points="0.0,7.0 5.6,4.5 18.5,4.5 25.5,3.4 33.3,3.4 39.4,1.3 46.3,0.2" fill="none" stroke="#f2a3a3" stroke-width="0.8"/></svg>
<div class="abs" style="left:402.5px;top:563.2px;width:18.8px;height:2px;background:#3faa45"></div>
<div class="abs" style="left:421.3px;top:563.2px;width:14.8px;height:2px;background:#e2231a"></div>
<div class="abs" style="left:436.1px;top:563.2px;width:5.6px;height:2px;background:#e8792b"></div>
<div class="abs" style="left:441.7px;top:563.2px;width:5.9px;height:2px;background:#f3cd2e"></div>
<div class="t" style="left:402.5px;top:568.0px;font-size:6.95px;color:#3e4650">Total: 13</div>
<svg class="abs" style="left:431px;top:568.1px" width="7" height="7" viewBox="0 0 7 7"><circle cx="3.5" cy="3.5" r="2.9" fill="none" stroke="#5b8fd6" stroke-width="0.6"/><path d="M3.5 3 L3.5 5.3" stroke="#5b8fd6" stroke-width="0.6"/><circle cx="3.5" cy="1.9" r="0.35" fill="#5b8fd6"/></svg>
<div class="abs" style="left:52.4px;top:581.5px;width:442.8px;height:0.8px;background:#eceef1"></div>
<div class="t" style="left:81.8px;top:590.4px;font-size:7.4px;color:#1f68c9">netbanking-deployment.y...</div>
<div class="t" style="left:204px;top:590.9px;font-size:7.1px;color:#3e4650">IaC</div>
<div class="abs" style="left:281.6px;top:587.4px;width:15.9px;height:13.4px;border:1px solid #cf9a6c;border-radius:2px;font-size:6.7px;font-weight:700;color:#9b5a22;text-align:center;line-height:11.4px;letter-spacing:-0.1px">712</div>
<svg class="abs" style="left:307.5px;top:589.1px" width="47" height="10"><polygon points="0,9 0.0,0.5 9.3,3.6 16.2,4.0 23.1,2.7 30.1,5.0 39.4,5.4 46.3,6.5 46.3,9" fill="#e4f3e4"/><polyline points="0.0,0.5 9.3,3.6 16.2,4.0 23.1,2.7 30.1,5.0 39.4,5.4 46.3,6.5" fill="none" stroke="#a9d6a9" stroke-width="0.8"/></svg>
<div class="abs" style="left:402.5px;top:588.2px;width:18.8px;height:2px;background:#3faa45"></div>
<div class="abs" style="left:421.3px;top:588.2px;width:14.8px;height:2px;background:#e2231a"></div>
<div class="abs" style="left:436.1px;top:588.2px;width:5.6px;height:2px;background:#e8792b"></div>
<div class="abs" style="left:441.7px;top:588.2px;width:5.9px;height:2px;background:#f3cd2e"></div>
<div class="t" style="left:402.5px;top:593.0px;font-size:6.95px;color:#3e4650">Total: 21</div>
<svg class="abs" style="left:431px;top:593.1px" width="7" height="7" viewBox="0 0 7 7"><circle cx="3.5" cy="3.5" r="2.9" fill="none" stroke="#5b8fd6" stroke-width="0.6"/><path d="M3.5 3 L3.5 5.3" stroke="#5b8fd6" stroke-width="0.6"/><circle cx="3.5" cy="1.9" r="0.35" fill="#5b8fd6"/></svg>
<div class="abs" style="left:52.4px;top:606.5px;width:442.8px;height:0.8px;background:#eceef1"></div>
<div class="t" style="left:81.8px;top:615.4px;font-size:7.4px;color:#1f68c9">elasticsearch 8.4</div>
<div class="t" style="left:204px;top:616.0px;font-size:7.1px;color:#3e4650">Tech</div>
<div class="abs" style="left:281.6px;top:612.4px;width:15.9px;height:13.4px;border:1px solid #959bdc;border-radius:2px;font-size:6.7px;font-weight:700;color:#5960b5;text-align:center;line-height:11.4px;letter-spacing:-0.1px">620</div>
<svg class="abs" style="left:307.5px;top:614.2px" width="47" height="10"><polygon points="0,9 0.0,7.0 5.6,4.5 18.5,4.5 25.5,3.4 33.3,3.4 39.4,1.3 46.3,0.2 46.3,9" fill="#fde9e9"/><polyline points="0.0,7.0 5.6,4.5 18.5,4.5 25.5,3.4 33.3,3.4 39.4,1.3 46.3,0.2" fill="none" stroke="#f2a3a3" stroke-width="0.8"/></svg>
<div class="abs" style="left:402.5px;top:613.3px;width:18.8px;height:2px;background:#3faa45"></div>
<div class="abs" style="left:421.3px;top:613.3px;width:14.8px;height:2px;background:#e2231a"></div>
<div class="abs" style="left:436.1px;top:613.3px;width:5.6px;height:2px;background:#e8792b"></div>
<div class="abs" style="left:441.7px;top:613.3px;width:5.9px;height:2px;background:#f3cd2e"></div>
<div class="t" style="left:402.5px;top:618.1px;font-size:6.95px;color:#3e4650">Total: 85</div>
<svg class="abs" style="left:431px;top:618.2px" width="7" height="7" viewBox="0 0 7 7"><circle cx="3.5" cy="3.5" r="2.9" fill="none" stroke="#5b8fd6" stroke-width="0.6"/><path d="M3.5 3 L3.5 5.3" stroke="#5b8fd6" stroke-width="0.6"/><circle cx="3.5" cy="1.9" r="0.35" fill="#5b8fd6"/></svg>
<div class="abs" style="left:52.4px;top:631.6px;width:442.8px;height:0.8px;background:#eceef1"></div>
<!-- PII CARD -->
<div class="card" style="left:516px;top:399.5px;width:267px;height:243px"></div>
<div class="t md" style="left:527.5px;top:413.02px;font-size:8.2px;color:#232a33">Top 10 Observed PII Data Types</div>
<div class="abs" style="left:538.7px;top:468.79999999999995px;width:104px;height:104px;border-radius:50%;box-shadow:0 4px 8px rgba(40,50,80,.16)"></div>
<svg class="abs" style="left:0;top:0" width="1023" height="802" viewBox="0 0 1023 802"><defs><radialGradient id="dg0" cx="590.7" cy="520.8" r="52.2" gradientUnits="userSpaceOnUse"><stop offset="0" stop-color="#0d2ea3"/><stop offset="0.86" stop-color="#0d2ea3"/><stop offset="1" stop-color="#7a95e0"/></radialGradient><radialGradient id="dg1" cx="590.7" cy="520.8" r="52.2" gradientUnits="userSpaceOnUse"><stop offset="0" stop-color="#15a89e"/><stop offset="0.86" stop-color="#15a89e"/><stop offset="1" stop-color="#7ad6cc"/></radialGradient><radialGradient id="dg2" cx="590.7" cy="520.8" r="52.2" gradientUnits="userSpaceOnUse"><stop offset="0" stop-color="#560b14"/><stop offset="0.86" stop-color="#560b14"/><stop offset="1" stop-color="#8a4a50"/></radialGradient><radialGradient id="dg3" cx="590.7" cy="520.8" r="52.2" gradientUnits="userSpaceOnUse"><stop offset="0" stop-color="#b47af0"/><stop offset="0.86" stop-color="#b47af0"/><stop offset="1" stop-color="#cfa8f6"/></radialGradient><radialGradient id="dg4" cx="590.7" cy="520.8" r="52.2" gradientUnits="userSpaceOnUse"><stop offset="0" stop-color="#a01fcf"/><stop offset="0.86" stop-color="#a01fcf"/><stop offset="1" stop-color="#c46ae0"/></radialGradient><radialGradient id="dg5" cx="590.7" cy="520.8" r="52.2" gradientUnits="userSpaceOnUse"><stop offset="0" stop-color="#78a3db"/><stop offset="0.86" stop-color="#78a3db"/><stop offset="1" stop-color="#a8c4ea"/></radialGradient><radialGradient id="dg6" cx="590.7" cy="520.8" r="52.2" gradientUnits="userSpaceOnUse"><stop offset="0" stop-color="#f6a81c"/><stop offset="0.86" stop-color="#f6a81c"/><stop offset="1" stop-color="#f9c86a"/></radialGradient><radialGradient id="dg7" cx="590.7" cy="520.8" r="52.2" gradientUnits="userSpaceOnUse"><stop offset="0" stop-color="#e8995a"/><stop offset="0.86" stop-color="#e8995a"/><stop offset="1" stop-color="#f0b88a"/></radialGradient><radialGradient id="dg8" cx="590.7" cy="520.8" r="52.2" gradientUnits="userSpaceOnUse"><stop offset="0" stop-color="#6f9bd5"/><stop offset="0.86" stop-color="#6f9bd5"/><stop offset="1" stop-color="#9dbbe4"/></radialGradient></defs><path d="M588.16 468.86 A52 52 0 0 1 633.35 550.55 L624.00 544.03 A40.6 40.6 0 0 0 588.72 480.25Z" fill="url(#dg0)"/><path d="M632.61 551.58 A52 52 0 0 1 562.76 564.66 L568.89 555.04 A40.6 40.6 0 0 0 623.42 544.84Z" fill="url(#dg1)"/><path d="M561.85 564.06 A52 52 0 0 1 541.03 536.18 L551.92 532.81 A40.6 40.6 0 0 0 568.17 554.58Z" fill="url(#dg2)"/><path d="M540.71 535.13 A52 52 0 0 1 538.70 520.80 L550.10 520.80 A40.6 40.6 0 0 0 551.67 531.99Z" fill="url(#dg3)"/><path d="M538.71 519.71 A52 52 0 0 1 541.36 504.39 L552.18 507.98 A40.6 40.6 0 0 0 550.11 519.95Z" fill="url(#dg4)"/><path d="M541.71 503.36 A52 52 0 0 1 551.57 486.55 L560.15 494.06 A40.6 40.6 0 0 0 552.45 507.18Z" fill="url(#dg5)"/><path d="M552.30 485.74 A52 52 0 0 1 567.34 474.34 L572.46 484.53 A40.6 40.6 0 0 0 560.72 493.42Z" fill="url(#dg6)"/><path d="M568.31 473.87 A52 52 0 0 1 578.03 470.37 L580.81 481.42 A40.6 40.6 0 0 0 573.22 484.16Z" fill="url(#dg7)"/><path d="M579.09 470.11 A52 52 0 0 1 586.71 468.95 L587.59 480.32 A40.6 40.6 0 0 0 581.64 481.22Z" fill="url(#dg8)"/><circle cx="590.7" cy="520.8" r="40.6" fill="#e4e9f1"/><circle cx="590.7" cy="520.8" r="38" fill="#f5f7fa"/></svg>
<div class="t" style="left:581.2px;top:505.8px;font-size:18px;color:#1f5fb5;-webkit-text-stroke:0.2px #1f5fb5">73</div>
<div class="t md" style="left:573.7px;top:528.3px;font-size:7px;-webkit-text-stroke:0.08px currentColor;color:#2c333d">Total Count</div>
<div class="abs" style="left:666.5px;top:444.8px;width:5.3px;height:5.3px;border-radius:1px;background:#1b36a6"></div>
<div class="t" style="left:676.2px;top:444.2px;font-size:7.24px;color:#4f5a66">Mobile Number</div>
<div class="t" style="right:264.8px;top:445.1px;font-size:6.3px;font-weight:700;color:#1f68c9">25</div>
<div class="abs" style="left:666.5px;top:460.1px;width:5.3px;height:5.3px;border-radius:1px;background:#1ea79d"></div>
<div class="t" style="left:676.2px;top:459.5px;font-size:7.24px;color:#4f5a66">Email ID</div>
<div class="t" style="right:264.8px;top:460.4px;font-size:6.3px;font-weight:700;color:#1f68c9">24</div>
<div class="abs" style="left:666.5px;top:475.4px;width:5.3px;height:5.3px;border-radius:1px;background:#4d0b12"></div>
<div class="t" style="left:676.2px;top:474.8px;font-size:7.24px;color:#4f5a66">Bank Account No.</div>
<div class="t" style="right:264.8px;top:475.7px;font-size:6.3px;font-weight:700;color:#1f68c9">7</div>
<div class="abs" style="left:666.5px;top:490.5px;width:5.3px;height:5.3px;border-radius:1px;background:#b57ef2"></div>
<div class="t" style="left:676.2px;top:489.9px;font-size:7.24px;color:#4f5a66">Auth Token</div>
<div class="t" style="right:264.8px;top:490.8px;font-size:6.3px;font-weight:700;color:#1f68c9">5</div>
<div class="abs" style="left:666.5px;top:505.6px;width:5.3px;height:5.3px;border-radius:1px;background:#9a22cf"></div>
<div class="t" style="left:676.2px;top:505.0px;font-size:7.24px;color:#4f5a66">API Key</div>
<div class="t" style="right:264.8px;top:505.9px;font-size:6.3px;font-weight:700;color:#1f68c9">4</div>
<div class="abs" style="left:666.5px;top:520.8px;width:5.3px;height:5.3px;border-radius:1px;background:#76a3da"></div>
<div class="t" style="left:676.2px;top:520.2px;font-size:7.24px;color:#4f5a66">Contact No.</div>
<div class="t" style="right:264.8px;top:521.1px;font-size:6.3px;font-weight:700;color:#1f68c9">3</div>
<div class="abs" style="left:666.5px;top:536.0px;width:5.3px;height:5.3px;border-radius:1px;background:#f7d65e"></div>
<div class="t" style="left:676.2px;top:535.4px;font-size:7.24px;color:#4f5a66">IP Address</div>
<div class="t" style="right:264.8px;top:536.3px;font-size:6.3px;font-weight:700;color:#1f68c9">2</div>
<div class="abs" style="left:666.5px;top:551.1px;width:5.3px;height:5.3px;border-radius:1px;background:#e9a062"></div>
<div class="t" style="left:676.2px;top:550.5px;font-size:7.24px;color:#4f5a66">PCI DSS (Open)</div>
<div class="t" style="right:264.8px;top:551.4px;font-size:6.3px;font-weight:700;color:#1f68c9">2</div>
<div class="abs" style="left:666.5px;top:571.4px;width:5.3px;height:5.3px;border-radius:1px;background:#e46262"></div>
<div class="t" style="left:676.2px;top:565.7px;font-size:7.24px;color:#4f5a66">Personal Info</div>
<div class="t" style="left:676.2px;top:576.2px;font-size:7.24px;color:#4f5a66">North...</div>
<div class="t" style="right:264.8px;top:571.7px;font-size:6.3px;font-weight:700;color:#1f68c9">1</div>
<div class="abs" style="left:666.5px;top:592.0px;width:5.3px;height:5.3px;border-radius:1px;background:#3f6fb2"></div>
<div class="t" style="left:676.2px;top:591.4px;font-size:7.24px;color:#4f5a66">Banking Info</div>
<div class="t" style="right:264.8px;top:592.3px;font-size:6.3px;font-weight:700;color:#1f68c9">0</div>
<!-- QDS CARD -->
<div class="card" style="left:794px;top:466px;width:218.3px;height:176.5px"></div>
<div class="t md" style="left:804.7px;top:478.78px;font-size:8.27px;color:#232a33">Confirmed Vulnerabilities By QDS Range</div>
<div class="abs" style="left:806.9px;top:519.5px;width:95.2px;height:95.2px;border-radius:50%;box-shadow:0 4px 9px rgba(40,50,80,.2)"></div>
<svg class="abs" style="left:0;top:0" width="1023" height="802" viewBox="0 0 1023 802"><defs><radialGradient id="gc" cx="854.5" cy="567.1" r="47.6" gradientUnits="userSpaceOnUse"><stop offset="0" stop-color="#c0002b"/><stop offset="0.72" stop-color="#c0002b"/><stop offset="1" stop-color="#e0365d"/></radialGradient><radialGradient id="gh" cx="854.5" cy="567.1" r="47.6" gradientUnits="userSpaceOnUse"><stop offset="0" stop-color="#f0421f"/><stop offset="0.72" stop-color="#f0421f"/><stop offset="1" stop-color="#f47055"/></radialGradient><radialGradient id="gm" cx="854.5" cy="567.1" r="47.6" gradientUnits="userSpaceOnUse"><stop offset="0" stop-color="#a25cff"/><stop offset="0.72" stop-color="#a25cff"/><stop offset="1" stop-color="#b883ff"/></radialGradient><radialGradient id="gl" cx="854.5" cy="567.1" r="47.6" gradientUnits="userSpaceOnUse"><stop offset="0" stop-color="#ffc75a"/><stop offset="0.72" stop-color="#ffc75a"/><stop offset="1" stop-color="#ffe6b0"/></radialGradient></defs><path d="M854.5 567.1 L854.50 519.50 A47.6 47.6 0 0 1 892.76 538.79Z" fill="url(#gc)" stroke="#fff" stroke-width="1.2" stroke-linejoin="round"/><path d="M854.5 567.1 L892.76 538.79 A47.6 47.6 0 0 1 902.10 567.10Z" fill="url(#gh)" stroke="#fff" stroke-width="1.2" stroke-linejoin="round"/><path d="M854.5 567.1 L902.10 567.10 A47.6 47.6 0 0 1 854.50 614.70Z" fill="url(#gm)" stroke="#fff" stroke-width="1.2" stroke-linejoin="round"/><path d="M854.5 567.1 L854.50 614.70 A47.6 47.6 0 0 1 854.50 519.50Z" fill="url(#gl)" stroke="#fff" stroke-width="1.2" stroke-linejoin="round"/></svg>
<div class="t md" style="left:920.3px;top:525.29px;font-size:6.9px;-webkit-text-stroke:0.18px currentColor;color:#2c333d">Total Vulnerabilities</div>
<div class="t" style="left:919.8px;top:535.1px;font-size:16.5px;color:#1f5fb5;-webkit-text-stroke:0.25px #1f5fb5">240</div>
<div class="abs" style="left:922.2px;top:561.1px;width:5px;height:5px;border-radius:1px;background:#c0002b"></div>
<div class="t" style="left:931.7px;top:560.8px;font-size:6.3px;color:#6b7a8c">Critical (90-100)</div>
<div class="t" style="right:24.5px;top:560.8px;font-size:6.3px;font-weight:700;color:#1f68c9">52</div>
<div class="abs" style="left:922.2px;top:574.6px;width:5px;height:5px;border-radius:1px;background:#f0421f"></div>
<div class="t" style="left:931.7px;top:574.3px;font-size:6.3px;color:#6b7a8c">High (70-89)</div>
<div class="t" style="right:24.5px;top:574.3px;font-size:6.3px;font-weight:700;color:#1f68c9">20</div>
<div class="abs" style="left:922.2px;top:588.1px;width:5px;height:5px;border-radius:1px;background:#a25cff"></div>
<div class="t" style="left:931.7px;top:587.8px;font-size:6.3px;color:#6b7a8c">Medium (40-69)</div>
<div class="t" style="right:24.5px;top:587.8px;font-size:6.3px;font-weight:700;color:#1f68c9">60</div>
<div class="abs" style="left:922.2px;top:601.6px;width:5px;height:5px;border-radius:1px;background:#ffc75a"></div>
<div class="t" style="left:931.7px;top:601.3px;font-size:6.3px;color:#6b7a8c">Low (1-39)</div>
<div class="t" style="right:24.5px;top:601.3px;font-size:6.3px;font-weight:700;color:#1f68c9">110</div>
<!-- VULNS BY STATUS -->
<div class="card" style="left:42px;top:653.3px;width:241.3px;height:138px"></div>
<div class="t md" style="left:52.7px;top:665.26px;font-size:7.88px;color:#232a33">VULNERABILITIES BY STATUS</div>
<div class="abs" style="left:52.7px;top:686.5px;width:219.5px;height:18.6px;background:#eaf0f8;border-radius:2px 2px 0 0"></div>
<div class="t" style="left:63.2px;top:692.6px;font-size:7.2px;color:#5d6b7a;transform:scaleX(.86);transform-origin:0 0;-webkit-text-stroke:0.15px #5d6b7a">STATUS</div>
<div class="t" style="right:761.1px;top:692.6px;font-size:7.2px;color:#5d6b7a;transform:scaleX(.83);transform-origin:100% 0;-webkit-text-stroke:0.15px #5d6b7a">COUNT</div>
<div class="t" style="left:64.7px;top:712.1px;font-size:6.7px;color:#3e4650">NEW</div>
<div class="t" style="right:761.1px;top:712.1px;font-size:6.7px;color:#3e4650">300</div>
<div class="abs" style="left:52.7px;top:723.7px;width:219.5px;height:0.8px;background:#eef0f3"></div>
<div class="t" style="left:64.7px;top:730.9px;font-size:6.7px;color:#3e4650">ACTIVE</div>
<div class="t" style="right:761.1px;top:730.9px;font-size:6.7px;color:#3e4650">340</div>
<div class="abs" style="left:52.7px;top:742.5px;width:219.5px;height:0.8px;background:#eef0f3"></div>
<div class="t" style="left:64.7px;top:749.7px;font-size:6.7px;color:#3e4650">FIXED</div>
<div class="t" style="right:761.1px;top:749.7px;font-size:6.7px;color:#3e4650">120</div>
<div class="abs" style="left:52.7px;top:761.3px;width:219.5px;height:0.8px;background:#eef0f3"></div>
<div class="t" style="left:64.7px;top:768.5px;font-size:6.7px;color:#3e4650">REOPENED</div>
<div class="t" style="right:761.1px;top:768.5px;font-size:6.7px;color:#3e4650">70</div>
<div class="abs" style="left:52.7px;top:780.1px;width:219.5px;height:0.8px;background:#eef0f3"></div>
<!-- DETECTIONS -->
<div class="card" style="left:293.3px;top:653.3px;width:489.5px;height:138px"></div>
<div class="t md" style="left:303.9px;top:665.69px;font-size:8.42px;color:#232a33">Detections In The Last 12 Months</div>
<div class="t" style="right:704.2px;top:704.7px;font-size:5.5px;color:#6b7a8c">1200</div>
<div class="t" style="right:704.2px;top:718.1px;font-size:5.5px;color:#6b7a8c">1100</div>
<div class="t" style="right:704.2px;top:731.3px;font-size:5.5px;color:#6b7a8c">1000</div>
<div class="t" style="right:704.2px;top:744.5px;font-size:5.5px;color:#6b7a8c">900</div>
<div class="t" style="right:704.2px;top:757.7px;font-size:5.5px;color:#6b7a8c">800</div>
<svg class="abs" style="left:0;top:0" width="1023" height="802" viewBox="0 0 1023 802"><defs><linearGradient id="gd" x1="0" y1="0" x2="0" y2="1"><stop offset="0" stop-color="#c8d8f0"/><stop offset="1" stop-color="#e9eff9"/></linearGradient></defs><path d="M323 707 L661 707" stroke="#d3d8df" stroke-width="0.6" stroke-dasharray="1.5 1.5"/><path d="M323 720.4 L661 720.4" stroke="#d3d8df" stroke-width="0.6" stroke-dasharray="1.5 1.5"/><path d="M323 733.6 L661 733.6" stroke="#d3d8df" stroke-width="0.6" stroke-dasharray="1.5 1.5"/><path d="M323 746.8 L661 746.8" stroke="#d3d8df" stroke-width="0.6" stroke-dasharray="1.5 1.5"/><polygon points="324.2,762.4 324.2,753.1 390.2,751.9 464,742.1 509.2,719.6 557.4,746.2 622.4,751.1 660.5,753.5 660.5,762.4" fill="url(#gd)"/><polyline points="324.2,753.1 390.2,751.9 464,742.1 509.2,719.6 557.4,746.2 622.4,751.1 660.5,753.5" fill="none" stroke="#4f86cf" stroke-width="0.9"/><circle cx="324.2" cy="753.1" r="1.2" fill="#fff" stroke="#4f86cf" stroke-width="0.7"/><circle cx="390.2" cy="751.9" r="1.2" fill="#fff" stroke="#4f86cf" stroke-width="0.7"/><circle cx="464" cy="742.1" r="1.2" fill="#fff" stroke="#4f86cf" stroke-width="0.7"/><circle cx="509.2" cy="719.6" r="1.2" fill="#fff" stroke="#4f86cf" stroke-width="0.7"/><circle cx="557.4" cy="746.2" r="1.2" fill="#fff" stroke="#4f86cf" stroke-width="0.7"/><circle cx="622.4" cy="751.1" r="1.2" fill="#fff" stroke="#4f86cf" stroke-width="0.7"/></svg>
<div class="t" style="left:323px;top:765.9px;font-size:5.4px;color:#6b7a8c">Jan 24</div>
<div class="t" style="left:351.6px;top:765.9px;font-size:5.4px;color:#6b7a8c">Feb 24</div>
<div class="t" style="left:380.4px;top:765.9px;font-size:5.4px;color:#6b7a8c">Mar 24</div>
<div class="t" style="left:409px;top:765.9px;font-size:5.4px;color:#6b7a8c">Apr 24</div>
<div class="t" style="left:437.8px;top:765.9px;font-size:5.4px;color:#6b7a8c">May 24</div>
<div class="t" style="left:466.4px;top:765.9px;font-size:5.4px;color:#6b7a8c">Jun 24</div>
<div class="t" style="left:495.3px;top:765.9px;font-size:5.4px;color:#6b7a8c">Jul 24</div>
<div class="t" style="left:523.9px;top:765.9px;font-size:5.4px;color:#6b7a8c">Aug 24</div>
<div class="t" style="left:552.5px;top:765.9px;font-size:5.4px;color:#6b7a8c">Sep 24</div>
<div class="t" style="left:581.3px;top:765.9px;font-size:5.4px;color:#6b7a8c">Oct 24</div>
<div class="t" style="left:610.1px;top:765.9px;font-size:5.4px;color:#6b7a8c">Nov 24</div>
<div class="t" style="left:638.5px;top:765.9px;font-size:5.4px;color:#6b7a8c">Dec 24</div>
<div class="t" style="left:675.3px;top:716.6px;font-size:24.9px;color:#1f5fb5">4100</div>
<div class="t" style="left:735.5px;top:729.6px;font-size:8.1px;color:#4a525c">(+28%)</div>
<svg class="abs" style="left:766.2px;top:729.5px" width="8" height="11" viewBox="0 0 8 11"><path d="M4 0.8 L4 10.3 M1 3.8 L4 0.8 L7 3.8" fill="none" stroke="#e8412c" stroke-width="0.8"/></svg>
<div class="t" style="left:688.3px;top:747.9px;font-size:6.35px;color:#1f68c9">Showing last Year</div>
<svg class="abs" style="left:741.5px;top:748px" width="6" height="5"><path d="M0.6 0.8 L3 3.2 L5.4 0.8" fill="none" stroke="#2f72d0" stroke-width="0.8"/></svg>
<!-- FIXED 30 DAYS -->
<div class="card" style="left:794px;top:653.3px;width:218.3px;height:137.5px"></div>
<div class="t md" style="left:804.8px;top:665.81px;font-size:8.31px;color:#232a33">Vulnerabilities Fixed In The Last 30 Days</div>
<svg class="abs" style="left:0;top:0" width="1023" height="802" viewBox="0 0 1023 802"><defs><linearGradient id="bc" x1="0" y1="0" x2="0" y2="1"><stop offset="0" stop-color="#e34a6b"/><stop offset="0.12" stop-color="#c6002f"/><stop offset="1" stop-color="#c0002b"/></linearGradient><linearGradient id="bh" x1="0" y1="0" x2="0" y2="1"><stop offset="0" stop-color="#f7a08a"/><stop offset="0.18" stop-color="#f0462a"/><stop offset="1" stop-color="#f0421f"/></linearGradient></defs><path d="M820.7 688.2 L989 688.2" stroke="#f0f2f5" stroke-width="0.6"/><path d="M820.7 699.6 L989 699.6" stroke="#f0f2f5" stroke-width="0.6"/><path d="M820.7 711 L989 711" stroke="#f0f2f5" stroke-width="0.6"/><path d="M820.7 722.4 L989 722.4" stroke="#f0f2f5" stroke-width="0.6"/><path d="M820.7 733.8 L989 733.8" stroke="#f0f2f5" stroke-width="0.6"/><path d="M820.7 745.2 L989 745.2" stroke="#f0f2f5" stroke-width="0.6"/><path d="M820.7 757.8 L989 757.8" stroke="#f0f2f5" stroke-width="0.6"/><path d="M820.7 770.5 L989 770.5" stroke="#f0f2f5" stroke-width="0.6"/><rect x="845.3" y="694.3" width="9.3" height="77.8" rx="1.2" fill="url(#bc)"/><rect x="901.4" y="706.4" width="9.1" height="65.7" rx="1.2" fill="url(#bh)"/><rect x="958.1" y="736.9" width="7.9" height="35.2" rx="1.2" fill="#a55bff"/></svg>
<div class="t" style="right:206.20000000000005px;top:686.1px;font-size:4.9px;color:#7b8794">1.4K</div>
<div class="t" style="right:206.20000000000005px;top:697.5px;font-size:4.9px;color:#7b8794">1.2K</div>
<div class="t" style="right:206.20000000000005px;top:708.9px;font-size:4.9px;color:#7b8794">1K</div>
<div class="t" style="right:206.20000000000005px;top:720.3px;font-size:4.9px;color:#7b8794">800</div>
<div class="t" style="right:206.20000000000005px;top:731.7px;font-size:4.9px;color:#7b8794">600</div>
<div class="t" style="right:206.20000000000005px;top:743.1px;font-size:4.9px;color:#7b8794">400</div>
<div class="t" style="right:206.20000000000005px;top:755.7px;font-size:4.9px;color:#7b8794">200</div>
<div class="t" style="right:206.20000000000005px;top:768.4px;font-size:4.9px;color:#7b8794">0</div>
<div class="t" style="left:839.9px;width:20px;text-align:center;top:687.9px;font-size:4.6px;color:#4f5a66">1.3k</div>
<div class="t" style="left:896px;width:20px;text-align:center;top:700.0px;font-size:4.6px;color:#4f5a66">1.1k</div>
<div class="t" style="left:952px;width:20px;text-align:center;top:730.4px;font-size:4.6px;color:#4f5a66">600</div>
<div class="t" style="left:834.9px;width:30px;text-align:center;top:777.8px;font-size:4.6px;color:#7b8794">Critical</div>
<div class="t" style="left:891px;width:30px;text-align:center;top:777.8px;font-size:4.6px;color:#7b8794">High</div>
<div class="t" style="left:947px;width:30px;text-align:center;top:777.8px;font-size:4.6px;color:#7b8794">Medium</div>
</body></html>
